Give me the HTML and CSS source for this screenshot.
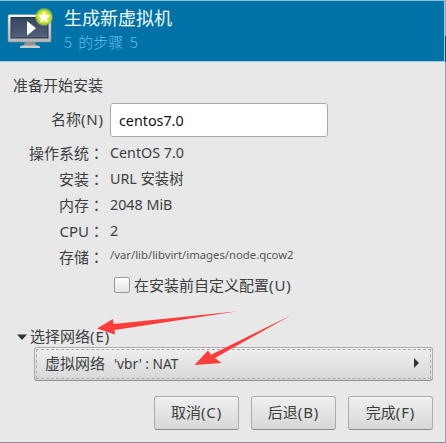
FILE: index.html
```
<!DOCTYPE html>
<html lang="zh-CN">
<head>
<meta charset="utf-8">
<title>生成新虚拟机</title>
<link rel="stylesheet" href="styles.css">
</head>
<body>
<div class="dialog">
  <header class="banner">
    <svg class="monitor" width="48" height="44" viewBox="0 0 48 44">
      <defs>
        <linearGradient id="screen" x1="0" y1="0" x2="0" y2="1"><stop offset="0" stop-color="#34465d"/><stop offset=".5" stop-color="#43536c"/><stop offset="1" stop-color="#56647c"/></linearGradient>
        <linearGradient id="frame" x1="0" y1="0" x2="0" y2="1"><stop offset="0" stop-color="#f4f4f2"/><stop offset="1" stop-color="#b5b7b7"/></linearGradient>
        <radialGradient id="glow"><stop offset="0" stop-color="#f4ff72"/><stop offset=".6" stop-color="#d4e829"/><stop offset=".82" stop-color="#a9cc38" stop-opacity=".85"/><stop offset="1" stop-color="#7db750" stop-opacity="0"/></radialGradient>
      </defs>
      <path d="M18 34h10l1 7H17z" fill="#8d9291"/>
      <path d="M14.500 40.500h17q1.500 0 1.500 2.500h-20q0-2.500 1.500-2.500z" fill="#c9cccb"/>
      <rect x="1" y="9.500" width="43" height="27.500" rx="1.500" fill="url(#frame)" stroke="#8a9194" stroke-width=".6"/>
      <rect x="4" y="12.500" width="37" height="20.500" fill="url(#screen)" stroke="#263444"/>
      <path d="M20 16v14.500l9-7.200z" fill="#fff"/>
      <circle cx="37" cy="12" r="9.500" fill="url(#glow)"/>
      <path d="M37 6l1.800 3.900 4.200.5-3.100 2.900.8 4.200-3.700-2.100-3.700 2.100.8-4.200-3.100-2.900 4.200-.5z" fill="#fff"/>
    </svg>
    <div class="heading">
      <h1>生成新虚拟机</h1>
      <p>5 的步骤 5</p>
    </div>
  </header>
  <main>
    <p class="intro">准备开始安装</p>
    <div class="form">
      <label class="key name" for="name">名称<span class="mnemonic">(N)</span></label>
      <input id="name" type="text" value="centos7.0">
      <span class="key">操作系统<i lang="zh-TW">：</i></span><span>CentOS 7.0</span>
      <span class="key">安装<i lang="zh-TW">：</i></span><span>URL 安装树</span>
      <span class="key">内存<i lang="zh-TW">：</i></span><span>2048 MiB</span>
      <span class="key">CPU<i lang="zh-TW">：</i></span><span>2</span>
      <span class="key">存储<i lang="zh-TW">：</i></span><span class="path">/var/lib/libvirt/images/node.qcow2</span>
    </div>
    <label class="customize"><input type="checkbox"><span>在安装前自定义配置<span class="mnemonic">(U)</span></span></label>
    <div class="expander">
      <svg width="10" height="6" viewBox="0 0 10 6"><path d="M0 .5h10L5 6z" fill="#2e3436"/></svg>
      <span>选择网络<span class="mnemonic">(E)</span></span>
    </div>
    <button class="network"><span>虚拟网络<span class="value">'vbr' : NAT</span></span>
      <svg width="5" height="10" viewBox="0 0 5 10"><path d="M0 0v10l5-5z" fill="#2e3436"/></svg>
    </button>
  </main>
  <footer>
    <button>取消<span class="mnemonic">(C)</span></button>
    <button>后退<span class="mnemonic">(B)</span></button>
    <button>完成<span class="mnemonic">(F)</span></button>
  </footer>
</div>
<svg class="arrows" width="446" height="443" viewBox="0 0 446 443">
  <path d="M97 328.500L113 319l.5 5L238 311.200 114.500 330l.5 4.500z" fill="#fb3d3b"/>
  <path d="M194.500 365L208 350.500l3 4.300L291.500 315 215 358l6.500 5z" fill="#fb3d3b"/>
</svg>
</body>
</html>
```
FILE: styles.css
```
* { box-sizing: border-box; }

body {
  margin: 0;
  width: 446px;
  height: 443px;
  overflow: hidden;
  background: linear-gradient(#a0a0a0 36px, #164766 36px, #164766 62px, #a0a0a0 62px);
  font: 15px/20px "Noto Sans", "Noto Sans CJK TC", sans-serif;
  color: #3b3f40;
}

h1, p { margin: 0; font-weight: 400; }

i { font-style: normal; }

button, input { font: inherit; color: inherit; }

.mnemonic { letter-spacing: .9px; }

.dialog {
  width: 445px;
  height: 443px;
  background: #e8e8e8;
  border-bottom: 1px solid #8b8b8b;
}

.banner {
  display: flex;
  height: 62px;
  padding: 4px 7px;
  background: #0072a8;
  border-top: 1px solid #8abed5;
  border-bottom: 1px solid #a6c8d7;
  border-right: 1px solid #a6c8d7;
}

.monitor { flex: none; }

.heading { padding-left: 9px; }

.heading h1 {
  font-size: 18px;
  line-height: 26px;
  color: #f2fafd;
}

.heading p {
  font-family: "Noto Sans CJK SC", sans-serif;
  font-weight: 300;
  line-height: 22px;
  word-spacing: 3px;
  color: #62bdec;
}

main { padding: 14px 12px 0 13px; }

.intro { line-height: 20px; margin-top: -1px; }

.form {
  display: grid;
  grid-template-columns: 91px 218px;
  grid-template-rows: 37px 26px 26px 26px 26px 25px;
  column-gap: 6px;
  align-items: center;
  margin-top: 8px;
  white-space: nowrap;
  font-size: 14.300px;
}

.form .key { font-size: 15px; text-align: right; }

.form .name { align-self: start; line-height: 32px; }

.form input {
  align-self: start;
  width: 218px;
  height: 34px;
  padding: 0 8px;
  border: 1px solid #aaa;
  border-radius: 3px;
  background: #fff;
  color: #111;
  outline: none;
}

.form .path { font-size: 11.300px; line-height: 16px; margin-top: -3px; color: #555; }

.customize {
  display: flex;
  align-items: center;
  gap: 4px;
  margin: 6px 0 0 101px;
  height: 20px;
}

.customize > span { margin-top: -1px; }

.customize input {
  appearance: none;
  width: 16px;
  height: 16px;
  margin: 0;
  border: 1px solid #999;
  border-radius: 2px;
  background: linear-gradient(#fff, #e4e4e4);
}

.expander {
  display: flex;
  align-items: center;
  gap: 3px;
  height: 21px;
  margin: 31px 0 0 4px;
}

.expander > span { margin-top: -2px; }

button {
  height: 34px;
  padding: 0;
  border: 1px solid #aaa;
  border-bottom-color: #8c8c8c;
  border-radius: 3px;
  background: linear-gradient(#efefef, #d8d8d8);
  box-shadow: inset 0 1px #f8f8f8;
}

.network {
  display: flex;
  align-items: center;
  justify-content: space-between;
  width: 399px;
  margin-left: 21px;
  padding: 0 13px 2px 10px;
  outline: 1px dashed #aaa;
  outline-offset: -3px;
}

.network .value { margin-left: 9px; font-size: 13.700px; }

footer {
  display: flex;
  justify-content: flex-end;
  gap: 12px;
  padding: 15px 12px 0 0;
}

footer button { width: 85px; padding-bottom: 2px; }

.arrows {
  position: absolute;
  top: 0;
  left: 0;
  pointer-events: none;
}
```
